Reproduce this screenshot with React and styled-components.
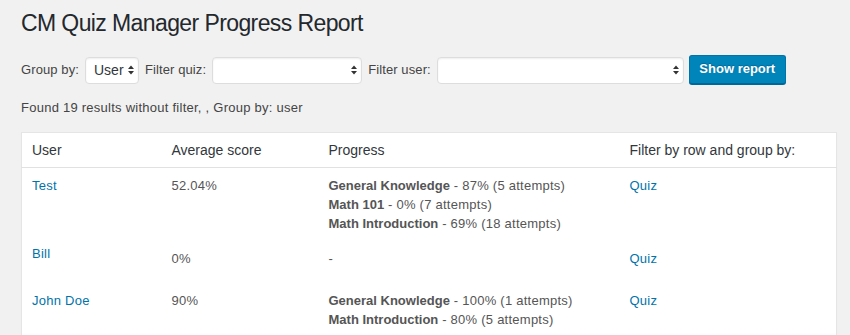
import React from "react";
import styled, { createGlobalStyle } from "styled-components";

const GlobalStyle = createGlobalStyle`
  html, body {
    margin: 0;
    padding: 0;
    height: 100%;
    overflow: hidden;
    background: #f1f1f1;
  }
  body {
    font-family: "Liberation Sans", Arial, sans-serif;
    font-size: 13px;
    color: #444;
    letter-spacing: 0.25px;
  }
`;

const Wrap = styled.div`
  margin: 0 13px 0 21px;
`;

const Title = styled.h1`
  margin: 0;
  padding: 9px 0 0;
  font-size: 23px;
  font-weight: 400;
  line-height: 29px;
  letter-spacing: -0.6px;
  color: #23282d;
`;

const FilterRow = styled.form`
  display: flex;
  align-items: center;
  gap: 6px;
  margin-top: 16px;
  height: 30px;
`;

const Label = styled.span`
  color: #444;
  line-height: 19px;
  letter-spacing: 0.1px;
  white-space: nowrap;
`;

const SelectBox = styled.div`
  box-sizing: border-box;
  flex: none;
  width: ${(p) => p.$w}px;
  height: 27px;
  margin-top: 2px;
  display: flex;
  align-items: center;
  justify-content: space-between;
  padding: 0 3px 0 8px;
  background: #fff;
  border: 1px solid #ddd;
  border-radius: 4px;
  box-shadow: inset 0 1px 2px rgba(0, 0, 0, 0.07);
  font-size: 14px;
  letter-spacing: 0;
  color: #32373c;
`;

const Button = styled.button`
  box-sizing: border-box;
  flex: none;
  height: 29px;
  width: 97px;
  margin-left: -1px;
  padding: 0 0 1px;
  background: #0085ba;
  border: 1px solid #0073aa;
  border-bottom-color: #006799;
  border-radius: 3px;
  box-shadow: 0 1px 0 #006799;
  color: #fff;
  font-family: inherit;
  font-size: 13px;
  font-weight: 700;
  letter-spacing: 0;
  white-space: nowrap;
  text-shadow: 0 -1px 1px #006799;
`;

const Summary = styled.p`
  margin: 14px 0 0;
  line-height: 19.5px;
`;

const Table = styled.table`
  margin-top: 14px;
  width: 100%;
  border-collapse: collapse;
  table-layout: fixed;
  background: #fff;
  border: 1px solid #e5e5e5;
  box-shadow: 0 1px 1px rgba(0, 0, 0, 0.04);
`;

const Th = styled.th`
  box-sizing: border-box;
  width: ${(p) => p.$w || "auto"};
  text-align: left;
  font-weight: 400;
  font-size: 14px;
  line-height: 19.6px;
  letter-spacing: 0;
  white-space: nowrap;
  padding: 8px 10px 7px;
  color: #32373c;
  border-bottom: 1px solid #e1e1e1;
`;

const Td = styled.td`
  vertical-align: top;
  padding: ${(p) => (p.$raised ? "3px" : "8px")} 10px ${(p) => (p.$tall ? "15px" : "8px")};
  line-height: 19px;
  color: #555;
  white-space: nowrap;
`;

const Link = styled.a`
  color: #0073aa;
  text-decoration: none;
`;

const Quiz = styled.b`
  font-weight: 700;
  letter-spacing: 0;
  color: #555;
`;

const Arrows = () => (
  <svg width="8" height="12" viewBox="0 0 8 12">
    <path d="M4 1.5 L7 5 H1 Z" fill="#333" />
    <path d="M4 10.5 L7 7 H1 Z" fill="#333" />
  </svg>
);

const rows = [
  {
    user: "Test",
    score: "52.04%",
    progress: [
      ["General Knowledge", "87% (5 attempts)"],
      ["Math 101", "0% (7 attempts)"],
      ["Math Introduction", "69% (18 attempts)"],
    ],
  },
  { user: "Bill", score: "0%", progress: [], odd: true },
  {
    user: "John Doe",
    score: "90%",
    progress: [
      ["General Knowledge", "100% (1 attempts)"],
      ["Math Introduction", "80% (5 attempts)"],
    ],
  },
];

export default function App() {
  return (
    <>
      <GlobalStyle />
      <Wrap>
        <Title>CM Quiz Manager Progress Report</Title>
        <FilterRow>
          <Label>Group by:</Label>
          <SelectBox $w={54}>
            <span>User</span>
            <Arrows />
          </SelectBox>
          <Label>Filter quiz:</Label>
          <SelectBox $w={150}>
            <span />
            <Arrows />
          </SelectBox>
          <Label>Filter user:</Label>
          <SelectBox $w={247}>
            <span />
            <Arrows />
          </SelectBox>
          <Button type="button">Show report</Button>
        </FilterRow>
        <Summary>Found 19 results without filter, , Group by: user</Summary>
        <Table>
          <thead>
            <tr>
              <Th $w="140px">User</Th>
              <Th $w="157px">Average score</Th>
              <Th $w="301px">Progress</Th>
              <Th>Filter by row and group by:</Th>
            </tr>
          </thead>
          <tbody>
            {rows.map((r) => (
              <tr key={r.user}>
                <Td $raised={r.odd}>
                  <Link href="#">{r.user}</Link>
                </Td>
                <Td $tall={r.odd}>{r.score}</Td>
                <Td $tall={r.odd}>
                  {r.progress.length === 0
                    ? "-"
                    : r.progress.map(([name, val]) => (
                        <div key={name}>
                          <Quiz>{name}</Quiz> - {val}
                        </div>
                      ))}
                </Td>
                <Td $tall={r.odd}>
                  <Link href="#">Quiz</Link>
                </Td>
              </tr>
            ))}
          </tbody>
        </Table>
      </Wrap>
    </>
  );
}
